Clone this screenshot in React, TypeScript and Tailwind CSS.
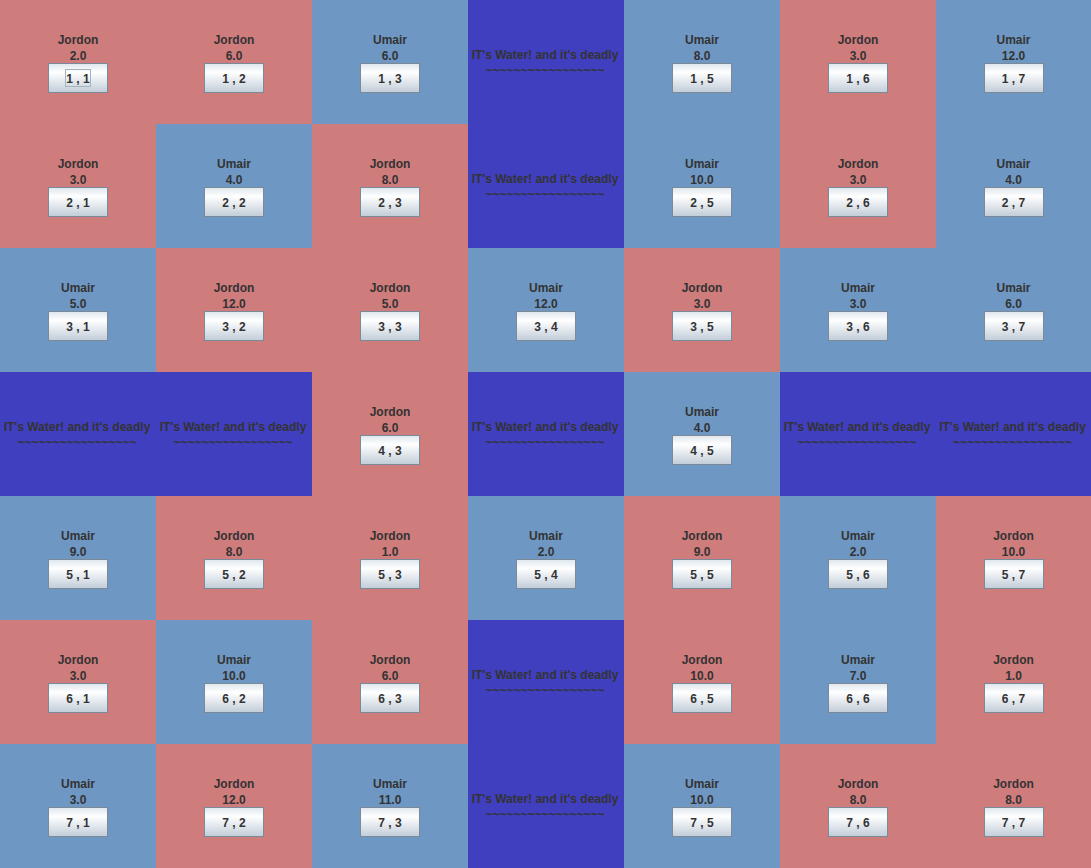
type Cell = { owner: 'Jordon' | 'Umair'; troops: string } | null;

const j = (troops: string): Cell => ({ owner: 'Jordon', troops });
const u = (troops: string): Cell => ({ owner: 'Umair', troops });
const water: Cell = null;

const board: Cell[][] = [
  [j('2.0'), j('6.0'), u('6.0'), water, u('8.0'), j('3.0'), u('12.0')],
  [j('3.0'), u('4.0'), j('8.0'), water, u('10.0'), j('3.0'), u('4.0')],
  [u('5.0'), j('12.0'), j('5.0'), u('12.0'), j('3.0'), u('3.0'), u('6.0')],
  [water, water, j('6.0'), water, u('4.0'), water, water],
  [u('9.0'), j('8.0'), j('1.0'), u('2.0'), j('9.0'), u('2.0'), j('10.0')],
  [j('3.0'), u('10.0'), j('6.0'), water, j('10.0'), u('7.0'), j('1.0')],
  [u('3.0'), j('12.0'), u('11.0'), water, u('10.0'), j('8.0'), j('8.0')],
];

const ownerColor = {
  Jordon: 'bg-[#cf7c7c]',
  Umair: 'bg-[#6e97c3]',
};

function WaterTile() {
  return (
    <div className="flex flex-col items-center justify-center bg-[#403fbf] pr-0.5 text-center whitespace-nowrap">
      <div className="h-8 pt-px">
        <p>IT's Water! and it's deadly</p>
        <p>~~~~~~~~~~~~~~~~~</p>
      </div>
    </div>
  );
}

function LandTile({ cell, row, col }: { cell: NonNullable<Cell>; row: number; col: number }) {
  const selected = row === 1 && col === 1;
  return (
    <div className={`flex flex-col items-center justify-center text-center ${ownerColor[cell.owner]}`}>
      <div className="h-8 pt-px">
        <p>{cell.owner}</p>
        <p>{cell.troops}</p>
      </div>
      <button
        type="button"
        className="flex h-[30px] w-[60px] items-center justify-center border border-[#7a8a99] bg-linear-to-b from-[#dfe7ee] via-white via-30% to-[#c3ced9]"
      >
        <span className={`h-4 pt-px ${selected ? 'outline outline-[#a3b3c2]' : ''}`}>
          {row} , {col}
        </span>
      </button>
    </div>
  );
}

export default function App() {
  return (
    <main className="grid min-h-screen auto-rows-fr grid-cols-[repeat(6,156fr)_155fr] font-['Liberation_Sans',Arial,sans-serif] text-xs leading-4 font-bold text-[#333333]">
      {board.map((cells, r) =>
        cells.map((cell, c) =>
          cell ? (
            <LandTile key={`${r}-${c}`} cell={cell} row={r + 1} col={c + 1} />
          ) : (
            <WaterTile key={`${r}-${c}`} />
          ),
        ),
      )}
    </main>
  );
}
